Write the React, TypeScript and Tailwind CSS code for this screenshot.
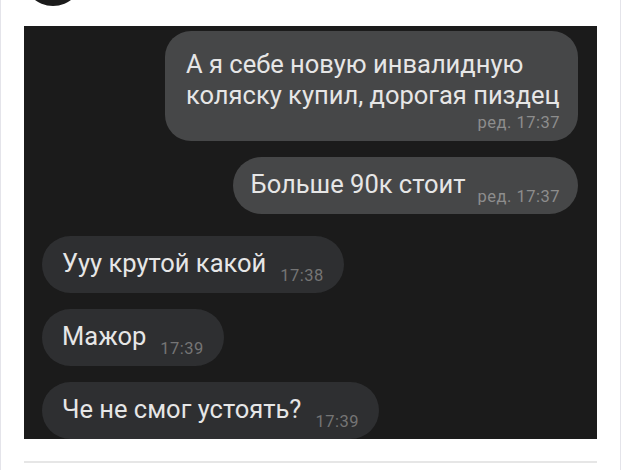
const messages = [
  { side: "out", text: "Больше 90к стоит", time: "ред. 17:37" },
  { side: "in", text: "Ууу крутой какой", time: "17:38" },
  { side: "in", text: "Мажор", time: "17:39" },
  { side: "in", text: "Че не смог устоять?", time: "17:39" },
];

function Bubble({ side, text, time }: { side: string; text: string; time: string }) {
  const out = side === "out";
  return (
    <div
      className={
        out
          ? "flex h-[57px] shrink-0 items-center self-end rounded-full bg-[#464748] pl-[18px] pr-[18px]"
          : "flex h-[57px] shrink-0 items-center self-start rounded-full bg-[#2e2f31] pl-5 pr-5"
      }
    >
      <span className="whitespace-nowrap text-[25.5px] leading-none text-[#e6e6e6]">{text}</span>
      <span
        className={
          out
            ? "mb-[8px] ml-3 self-end whitespace-nowrap text-[16.5px] leading-none tracking-[0.5px] text-[#8d8d8d]"
            : "mb-[8px] ml-[14px] self-end whitespace-nowrap text-[16.5px] leading-none tracking-[0.5px] text-[#757575]"
        }
      >
        {time}
      </span>
    </div>
  );
}

export default function App() {
  return (
    <div className="h-[470px] w-[621px] bg-white font-['Roboto',sans-serif]">
      <div className="relative h-full w-[621px] overflow-hidden border-x border-[#e4e4ea] px-[23px] pt-[26px]">
        <div aria-hidden className="absolute -top-[54px] left-[22px] h-[60px] w-[60px] rounded-full bg-[#1b1b1b]" />
        <div className="flex h-[413px] flex-col gap-4 overflow-hidden bg-[#1b1b1b] pl-[18px] pr-[19px] pt-[5px]">
          <div className="flex w-[413px] shrink-0 flex-col self-end rounded-[26px] bg-[#464748] pb-[9px] pl-[21px] pr-[18px] pt-[18px]">
            <p className="whitespace-nowrap text-[25.5px] leading-[31px] text-[#e6e6e6]">
              А я себе новую инвалидную
              <br />
              коляску купил, дорогая пиздец
            </p>
            <span className="mt-[4px] self-end whitespace-nowrap text-[16.5px] leading-none tracking-[0.5px] text-[#8d8d8d]">
              ред. 17:37
            </span>
          </div>
          {messages.map((m, i) => (
            <div key={i} className={i === 1 ? "mt-[6px] flex flex-col" : "flex flex-col"}>
              <Bubble {...m} />
            </div>
          ))}
        </div>
        <div className="mt-[22px] h-[2px] bg-[#e6e6e6]" />
      </div>
    </div>
  );
}
